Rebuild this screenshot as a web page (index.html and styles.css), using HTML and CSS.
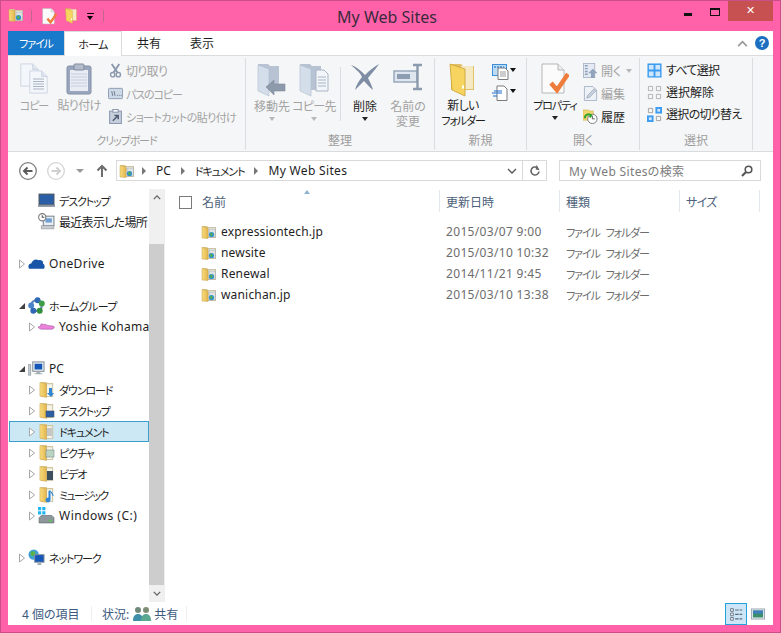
FILE: index.html
```html
<!DOCTYPE html>
<html lang="ja">
<head>
<meta charset="utf-8">
<title>My Web Sites</title>
<link rel="stylesheet" href="styles.css">
</head>
<body>
<svg class="defs" width="0" height="0">
  <defs>
    <linearGradient id="fy" x1="0" y1="0" x2="1" y2="0"><stop offset="0" stop-color="#f8dc7e"/><stop offset="1" stop-color="#e3b64e"/></linearGradient>
    <symbol id="folder" viewBox="0 0 16 16">
      <path d="M1 2h5l1 1h8v11H1z" fill="#d9c68a"/>
      <path d="M7 3.500h7.500v10H7z" fill="#f3f0e4" stroke="#b9b5a2" stroke-width=".6"/>
      <path d="M1 2.500 7 4v10.500l-6-.5z" fill="url(#fy)" stroke="#c9a24a" stroke-width=".5"/>
    </symbol>
    <symbol id="webfolder" viewBox="0 0 16 16">
      <use href="#folder"/>
      <rect x="8" y="5" width="6.500" height="8" fill="#dfe2e2" stroke="#9b9f9f" stroke-width=".5"/>
      <circle cx="10.500" cy="10.500" r="2.600" fill="#2d8fd0"/>
      <path d="M9 9.500c1-1 2-1 2.500 0s0 2-1 2.500-1.500-1.500-1.500-2.500z" fill="#55b04a"/>
    </symbol>
    <symbol id="tri-o" viewBox="0 0 8 10"><path d="M1.500 1v8L6.500 5z" fill="#fff" stroke="#a6a6a6"/></symbol>
    <symbol id="tri-f" viewBox="0 0 8 8"><path d="M7 1v6H1z" fill="#404040"/></symbol>
    <symbol id="doc" viewBox="0 0 24 30">
      <path d="M1 1h15l7 7v21H1z" fill="#f3f6fb" stroke="#c5cfdd"/>
      <path d="M16 1v7h7" fill="#dfe6f0" stroke="#c5cfdd"/>
    </symbol>
    <symbol id="copy" viewBox="0 0 28 32">
      <use href="#doc" x="0" y="0" width="19" height="24"/>
      <use href="#doc" x="9" y="7" width="19" height="24"/>
      <path d="M13 16h11M13 18.500h11M13 21h11M13 23.500h11M13 26h11" stroke="#a9b4c3"/>
    </symbol>
    <symbol id="paste" viewBox="0 0 26 32">
      <rect x="1" y="3" width="24" height="28" rx="2" fill="#9aa6bd" stroke="#8290a8"/>
      <rect x="4" y="7" width="18" height="21" fill="#e9edf3"/>
      <path d="M5 11h16M5 14h16M5 17h16M5 20h16M5 23h16" stroke="#c6cede"/>
      <rect x="8" y="1" width="10" height="6" rx="1" fill="#b4bccb" stroke="#7f8ba0"/>
    </symbol>
    <symbol id="scissors" viewBox="0 0 12 16"><path d="M2 1l6 9M10 1 4 10" stroke="#8c99ad" stroke-width="2" fill="none"/><circle cx="3" cy="12.500" r="2.300" fill="none" stroke="#8c99ad" stroke-width="1.500"/><circle cx="9" cy="12.500" r="2.300" fill="none" stroke="#8c99ad" stroke-width="1.500"/></symbol>
    <symbol id="path" viewBox="0 0 16 12"><rect x=".5" y=".5" width="15" height="11" rx="1" fill="#ced9e8" stroke="#8b9ab0"/><path d="M4 3.500l1 5M6.500 3.500l1 5" stroke="#68768c"/><path d="M9.500 8h1M11.500 8h1M13.500 8h1" stroke="#68768c"/></symbol>
    <symbol id="shortcut" viewBox="0 0 12 14"><rect x=".5" y="2" width="11" height="11.500" fill="#c7cfdc" stroke="#8e9ab0"/><rect x="3.500" y=".5" width="5" height="2.500" fill="#fff" stroke="#8e9ab0"/><path d="M3.500 11 8 6.500M5 6h3.500v3.500" stroke="#4d5b73" stroke-width="1.400" fill="none"/></symbol>
    <symbol id="move" viewBox="0 0 30 34">
      <path d="M1 1h10l2 2h9v24H1z" fill="#b7c3d3"/>
      <path d="M1 2l11 4v27L1 28z" fill="#d4deeb" stroke="#aebccd" stroke-width=".6"/>
      <path d="M9 24l8-7v4h11v7H17v4z" fill="#8d9aaa" stroke="#7f8c9c" stroke-width=".6"/>
    </symbol>
    <symbol id="copyto" viewBox="0 0 30 34">
      <path d="M1 1h10l2 2h9v24H1z" fill="#b7c3d3"/>
      <path d="M1 2l11 4v27L1 28z" fill="#d4deeb" stroke="#aebccd" stroke-width=".6"/>
      <path d="M17 7h8l4 4v17H17z" fill="#f2f5f9" stroke="#a9b5c6"/>
      <path d="M19 14h8M19 17h8M19 20h8M19 23h8" stroke="#a9b5c6"/>
    </symbol>
    <symbol id="del" viewBox="0 0 30 28"><path d="M1 2c6 2 10 6 14 10C20 7 24 4 29 1c-4 6-8 10-11 14 2 4 4 8 5 12-4-3-6-6-9-9-3 3-6 6-9 9 1-5 4-9 7-13C10 9 5 6 1 2z" fill="#7e8da3"/></symbol>
    <symbol id="rename" viewBox="0 0 30 28"><rect x="1" y="8" width="23" height="11" fill="#dfe6ef" stroke="#93a3b7" stroke-width="1.400"/><rect x="4" y="11" width="13" height="5" fill="#8d9db2"/><path d="M20 2h9M20 26h9M24.500 2v24" stroke="#8c9aae" stroke-width="2.400" fill="none"/></symbol>
    <symbol id="bigfolder" viewBox="0 0 28 34">
      <path d="M2 1h10l2 2h11v24H2z" fill="#e2c268"/>
      <path d="M12 3h12v23H12z" fill="#f4e9c2"/>
      <path d="M1 1l15 5v27L3 27z" fill="#f6d45f" stroke="#c99f36" stroke-width=".8"/>
      <path d="M14 22a1 2 0 1 0 .01 0z" fill="#fff"/>
    </symbol>
    <symbol id="newitem" viewBox="0 0 17 16"><rect x=".5" y=".5" width="14" height="11" fill="#bcdcf6" stroke="#3e8fd6"/><path d="M2 3h10" stroke="#3e8fd6" stroke-width="1.500" stroke-dasharray="2 1"/><path d="M6 4h7l3 3v8.500H6z" fill="#fff" stroke="#7b7b7b"/><path d="M8 8h6M8 10h6M8 12h6" stroke="#9a9a9a"/></symbol>
    <symbol id="easy" viewBox="0 0 17 16"><path d="M5 1h7l3 3v11.500H5z" fill="#fff" stroke="#7b7b7b"/><path d="M0 8h10M2 6h8M1 11h4" stroke="#1a6fd2" stroke-width="1.200"/></symbol>
    <symbol id="props" viewBox="0 0 28 32">
      <path d="M1 1h16l6 6v23H1z" fill="#fbfbfb" stroke="#b6b6b6"/>
      <path d="M17 1v6h6" fill="#ececec" stroke="#b6b6b6"/>
      <path d="M10 20l6 7 11-16" fill="none" stroke="#ee7c3b" stroke-width="4.500"/>
    </symbol>
    <symbol id="open" viewBox="0 0 16 16"><rect x=".5" y=".5" width="12" height="15" fill="#e4eaf3" stroke="#aeb9c9"/><path d="M2 3h3M2 6h3M2 9h3M2 12h3" stroke="#8fa1b8" stroke-width="1.500"/><path d="M10.500 6l5 5h-3v5h-4v-5h-3z" fill="#8fa3ba"/></symbol>
    <symbol id="edit" viewBox="0 0 14 16"><path d="M.5.500h9l4 4v11H.5z" fill="#eef2f7" stroke="#a7b4c6"/><path d="M3 13l1-3 7-7 2 2-7 7z" fill="#c8d1de" stroke="#8c9ab0" stroke-width=".7"/></symbol>
    <symbol id="history" viewBox="0 0 16 16"><path d="M0 1h6l1 1h4v10H0z" fill="#f2d66f" stroke="#c9a540" stroke-width=".5"/><circle cx="10" cy="10.500" r="5" fill="#fff" stroke="#777"/><path d="M10 7.500v3h2.500" stroke="#555" fill="none"/><path d="M2 10a4 4 0 0 1 7-3l-2 2" fill="none" stroke="#2ea32e" stroke-width="2"/></symbol>
    <symbol id="selall" viewBox="0 0 16 16"><rect x=".5" y=".5" width="15" height="15" fill="#3b9cf0"/><path d="M2 2h5v5H2zM9 2h5v5H9zM2 9h5v5H2zM9 9h5v5H9z" fill="#cfe6fb"/></symbol>
    <symbol id="selnone" viewBox="0 0 16 16"><path d="M1.500 1.500h4.500v4.500H1.500zM10 1.500h4.500v4.500H10zM1.500 10h4.500v4.500H1.500zM10 10h4.500v4.500H10z" fill="none" stroke="#b0b0b0"/></symbol>
    <symbol id="selinv" viewBox="0 0 16 16"><path d="M1.500 1.500h4.500v4.500H1.500zM10 10h4.500v4.500H10z" fill="none" stroke="#a0a0a0"/><rect x="9" y="0" width="7" height="7" fill="#3b9cf0"/><rect x="0" y="9" width="7" height="7" fill="#3b9cf0"/><rect x="11" y="2" width="3" height="3" fill="#cfe6fb"/><rect x="2" y="11" width="3" height="3" fill="#cfe6fb"/></symbol>
    <symbol id="desk" viewBox="0 0 16 16"><rect x="1" y="2" width="14" height="10" fill="#2a5fa8" stroke="#46525f"/><rect x="0" y="12" width="16" height="2" fill="#8a949e"/></symbol>
    <symbol id="recent" viewBox="0 0 16 16"><rect x="5" y="3" width="10" height="9" fill="#e8eef4" stroke="#7b8794"/><rect x="7" y="5" width="6" height="4" fill="#6f9ed0"/><rect x="3" y="12" width="12" height="3" fill="#c7ccd1" stroke="#8a9097" stroke-width=".5"/><circle cx="4" cy="4" r="3.400" fill="#fff" stroke="#777"/><path d="M4 2v2h2" stroke="#555" fill="none"/></symbol>
    <symbol id="onedrive" viewBox="0 0 16 12"><path d="M1 11C-.5 8 1 6 3 6c1-3 4-5 7-3 2-1 5 1 4 3 2 1 2 4 1 5z" fill="#1a56a8"/></symbol>
    <symbol id="group" viewBox="0 0 16 16"><circle cx="8" cy="8" r="5" fill="none" stroke="#5b7fb3" stroke-width="2"/><circle cx="9" cy="3" r="2.800" fill="#2f68b5"/><circle cx="3" cy="8" r="2.800" fill="#4b83c9"/><circle cx="13" cy="6" r="2.800" fill="#3f9e46"/><circle cx="11" cy="13" r="2.800" fill="#2f8f3a"/><circle cx="5" cy="13" r="2.800" fill="#2f68b5"/></symbol>
    <symbol id="yoshie" viewBox="0 0 16 8"><path d="M3 1.500c2 1 4 0 5 1s5 .5 7 1.500c1 1 0 2-2 2.500H4C2 6.500 1 6 0 4.500l2-.5z" fill="#ec82dc" stroke="#a55aa5" stroke-width=".6"/></symbol>
    <symbol id="pc" viewBox="0 0 18 16"><rect x="5" y="1" width="12" height="10" fill="#dfe5ea" stroke="#808b96"/><rect x="7" y="3" width="8" height="6" fill="#1557b8"/><path d="M9 11h4v2h2v1H7v-1h2z" fill="#a3adb6"/><rect x="0" y="4" width="3" height="11" fill="#c3cbd1" stroke="#7b858f" stroke-width=".6"/></symbol>
    <symbol id="kfolder" viewBox="0 0 16 18">
      <path d="M2 1h6l1 1h6v15H2z" fill="#d9c68a"/>
      <path d="M8 3h6.500v13.500H8z" fill="#f6f3e8" stroke="#b9b5a2" stroke-width=".6"/>
      <path d="M1 1.500 8 3v14.500L1 16z" fill="url(#fy)" stroke="#c9a24a" stroke-width=".5"/>
    </symbol>
    <symbol id="drive" viewBox="0 0 16 16"><path d="M0 0h3v3H0zM4 0h3v3H4zM0 4h3v3H0zM4 4h3v3H4z" fill="#1fb6f1"/><path d="M1 10l2-2h10l2 2v5H1z" fill="#8d979c" stroke="#5f686d" stroke-width=".6"/><rect x="10" y="12" width="3" height="1.500" fill="#5ec24e"/></symbol>
    <symbol id="net" viewBox="0 0 18 18"><circle cx="6" cy="6" r="5.500" fill="#3f9fd8"/><path d="M3 3c2-1 4-1 5 1 0 2-2 2-3 4-2 0-3-2-2-5z" fill="#5ab34a"/><rect x="7" y="6" width="10" height="8" fill="#1557b8" stroke="#8b949c"/><rect x="10" y="14" width="4" height="3" fill="#a6aeb5"/></symbol>
    <symbol id="users" viewBox="0 0 18 16"><circle cx="5" cy="4" r="3" fill="#6f8a78"/><path d="M0 15c0-5 2-7 5-7s5 2 5 7z" fill="#3f8fa8"/><circle cx="13" cy="4" r="3" fill="#7c8f75"/><path d="M8 15c0-5 2-7 5-7s5 2 5 7z" fill="#5aa88f"/></symbol>
    <symbol id="mag" viewBox="0 0 12 12"><circle cx="7.500" cy="4.500" r="3.300" fill="none" stroke="#555" stroke-width="1.600"/><path d="M5 7 1 11" stroke="#555" stroke-width="2.200"/></symbol>
  </defs>
</svg>

<div class="window">
  <header class="titlebar">
    <div class="qat">
      <svg class="ic16"><use href="#webfolder"/></svg>
      <span class="qat-sep"></span>
      <svg class="qat-doc"><use href="#props"/></svg>
      <svg class="qat-folder"><use href="#bigfolder"/></svg>
      <span class="qat-drop"></span>
      <span class="qat-sep qat-sep-last"></span>
    </div>
    <h1 class="title">My Web Sites</h1>
    <div class="controls">
      <span class="ctl"><i class="ctl-min"></i></span>
      <span class="ctl"><i class="ctl-max"></i></span>
      <span class="ctl-close">✕</span>
    </div>
  </header>

  <div class="frame">
    <nav class="tabs">
      <span class="tab tab-file n">ファイル</span>
      <span class="tab tab-home n1">ホーム</span>
      <span class="tab tab-share">共有</span>
      <span class="tab tab-view">表示</span>
      <span class="tabs-right">
        <svg class="chev" viewBox="0 0 12 8"><path d="M1 7l5-5 5 5" fill="none" stroke="#9a9a9a" stroke-width="2"/></svg>
        <span class="help">?</span>
      </span>
    </nav>

    <section class="ribbon">
      <div class="group g-clip">
        <div class="group-body">
          <div class="big w-copy dis"><svg class="i-copy"><use href="#copy"/></svg><span class="n">コピー</span></div>
          <div class="big w-paste dis"><svg class="i-paste"><use href="#paste"/></svg><span class="n0">貼り付け</span></div>
          <div class="small-col dis">
            <div class="small"><svg class="s-ic"><use href="#scissors"/></svg><span class="n0">切り取り</span></div>
            <div class="small"><svg class="s-ic"><use href="#path"/></svg><span class="n">パスのコピー</span></div>
            <div class="small"><svg class="s-ic"><use href="#shortcut"/></svg><span class="n1">ショートカットの貼り付け</span></div>
          </div>
        </div>
        <div class="group-label n">クリップボード</div>
      </div>
      <div class="group g-org">
        <div class="group-body">
          <div class="big w-move dis"><svg class="i-move"><use href="#move"/></svg><span>移動先</span><i class="caret caret-dis"></i></div>
          <div class="big w-copyto dis"><svg class="i-move"><use href="#copyto"/></svg><span class="n0">コピー先</span><i class="caret caret-dis"></i></div>
          <span class="vsep"></span>
          <div class="big w-del"><svg class="i-del"><use href="#del"/></svg><span>削除</span><i class="caret"></i></div>
          <div class="big w-ren dis"><svg class="i-del"><use href="#rename"/></svg><span>名前の<br>変更</span></div>
        </div>
        <div class="group-label">整理</div>
      </div>
      <div class="group g-new">
        <div class="group-body">
          <div class="big w-newf"><svg class="i-bigf"><use href="#bigfolder"/></svg><span class="n0">新しい<br><span class="n">フォルダー</span></span></div>
          <div class="new-col">
            <div class="new-item"><svg class="n-ic"><use href="#newitem"/></svg><i class="caret"></i></div>
            <div class="new-item"><svg class="n-ic"><use href="#easy"/></svg><i class="caret"></i></div>
          </div>
        </div>
        <div class="group-label">新規</div>
      </div>
      <div class="group g-open">
        <div class="group-body">
          <div class="big w-props"><svg class="i-props"><use href="#props"/></svg><span class="n">プロパティ</span><i class="caret"></i></div>
          <div class="small-col col-open">
            <div class="small dis"><svg class="s-ic"><use href="#open"/></svg><span>開く</span><i class="caret caret-dis caret-inline"></i></div>
            <div class="small dis"><svg class="s-ic"><use href="#edit"/></svg><span>編集</span></div>
            <div class="small"><svg class="s-ic"><use href="#history"/></svg><span>履歴</span></div>
          </div>
        </div>
        <div class="group-label">開く</div>
      </div>
      <div class="group g-sel">
        <div class="group-body">
          <div class="small-col col-sel">
            <div class="small"><svg class="s-ic"><use href="#selall"/></svg><span class="n0">すべて選択</span></div>
            <div class="small"><svg class="s-ic"><use href="#selnone"/></svg><span>選択解除</span></div>
            <div class="small"><svg class="s-ic"><use href="#selinv"/></svg><span class="n0">選択の切り替え</span></div>
          </div>
        </div>
        <div class="group-label">選択</div>
      </div>
    </section>

    <section class="addressbar">
      <span class="nav-btn nav-back"><svg viewBox="0 0 18 18"><circle cx="9" cy="9" r="8.300" fill="#fff" stroke="#7d7d7d" stroke-width="1.300"/><path d="M13.500 9h-8M8.500 5.500 5 9l3.500 3.500" fill="none" stroke="#5c5c5c" stroke-width="2"/></svg></span>
      <span class="nav-btn nav-fwd"><svg viewBox="0 0 18 18"><circle cx="9" cy="9" r="8.300" fill="#fff" stroke="#d4d4d4" stroke-width="1.300"/><path d="M4.500 9h8M9.500 5.500 13 9l-3.500 3.500" fill="none" stroke="#cfcfcf" stroke-width="2"/></svg></span>
      <i class="nav-drop"></i>
      <svg class="nav-up" viewBox="0 0 12 14"><path d="M6 13V2M1.500 6.500 6 2l4.500 4.500" fill="none" stroke="#6d6d6d" stroke-width="2"/></svg>
      <div class="addr">
        <svg class="ic16"><use href="#webfolder"/></svg>
        <i class="crumb"></i><span class="ctext">PC</span>
        <i class="crumb"></i><span class="ctext n">ドキュメント</span>
        <i class="crumb"></i><span class="ctext la">My Web Sites</span>
        <svg class="addr-chev" viewBox="0 0 10 6"><path d="M1 1l4 4 4-4" fill="none" stroke="#555" stroke-width="1.300"/></svg>
      </div>
      <div class="refresh"><svg viewBox="0 0 12 12"><path d="M10 6.500a4 4 0 1 1-1.500-3.700" fill="none" stroke="#666" stroke-width="1.600"/><path d="M7 0v5h4z" transform="rotate(10 9 3)" fill="#666"/></svg></div>
      <div class="search"><span class="la">My Web Sitesの検索</span><svg class="mag"><use href="#mag"/></svg></div>
    </section>

    <main class="main">
      <aside class="tree">
        <div class="tree-list">
          <div class="row ind2"><span class="tw"></span><svg class="t-ic"><use href="#desk"/></svg><span class="n">デスクトップ</span></div>
          <div class="row ind2"><span class="tw"></span><svg class="t-ic"><use href="#recent"/></svg><span class="n0">最近表示した場所</span></div>
          <div class="row row-gap"></div>
          <div class="row ind1"><svg class="tw"><use href="#tri-o"/></svg><svg class="t-ic"><use href="#onedrive"/></svg><span class="la">OneDrive</span></div>
          <div class="row row-gap"></div>
          <div class="row ind1"><svg class="tw tw-f"><use href="#tri-f"/></svg><svg class="t-ic"><use href="#group"/></svg><span class="n1">ホームグループ</span></div>
          <div class="row ind2"><svg class="tw"><use href="#tri-o"/></svg><svg class="t-ic"><use href="#yoshie"/></svg><span class="la">Yoshie Kohama</span></div>
          <div class="row row-gap"></div>
          <div class="row ind1"><svg class="tw tw-f"><use href="#tri-f"/></svg><svg class="t-ic"><use href="#pc"/></svg><span>PC</span></div>
          <div class="row ind2"><svg class="tw"><use href="#tri-o"/></svg><svg class="t-ic"><use href="#kfolder"/><path d="M11 7v5H9l4 4 3-4h-2V7z" fill="#2f86d6"/></svg><span class="n">ダウンロード</span></div>
          <div class="row ind2"><svg class="tw"><use href="#tri-o"/></svg><svg class="t-ic"><use href="#kfolder"/><rect x="8" y="9" width="8" height="6" fill="#2a5fa8" stroke="#46525f" stroke-width=".6"/></svg><span class="n">デスクトップ</span></div>
          <div class="row ind2 row-sel"><svg class="tw"><use href="#tri-o"/></svg><svg class="t-ic"><use href="#kfolder"/><path d="M9 6h5M9 8h5M9 10h5M9 12h5" stroke="#8e9aa8"/></svg><span class="n">ドキュメント</span></div>
          <div class="row ind2"><svg class="tw"><use href="#tri-o"/></svg><svg class="t-ic"><use href="#kfolder"/><rect x="8" y="6" width="8" height="7" fill="#b9d4c2" stroke="#7d8c92" stroke-width=".6"/></svg><span class="n">ピクチャ</span></div>
          <div class="row ind2"><svg class="tw"><use href="#tri-o"/></svg><svg class="t-ic"><use href="#kfolder"/><rect x="9" y="6" width="6" height="9" fill="#3d4f5c"/></svg><span class="n">ビデオ</span></div>
          <div class="row ind2"><svg class="tw"><use href="#tri-o"/></svg><svg class="t-ic"><use href="#kfolder"/><path d="M12 5v9a2 2 0 1 1-2-2h1V5zM12 5c2 1 3 3 3 5" fill="#2f86d6" stroke="#2f86d6"/></svg><span class="n2">ミュージック</span></div>
          <div class="row ind2"><svg class="tw"><use href="#tri-o"/></svg><svg class="t-ic"><use href="#drive"/></svg><span class="la2">Windows (C:)</span></div>
          <div class="row row-gap"></div>
          <div class="row ind1"><svg class="tw"><use href="#tri-o"/></svg><svg class="t-ic"><use href="#net"/></svg><span class="n">ネットワーク</span></div>
        </div>
        <div class="scroll">
          <div class="sc-btn"><svg viewBox="0 0 10 6"><path d="M1 5l4-4 4 4" fill="none" stroke="#606060" stroke-width="1.600"/></svg></div>
          <div class="sc-space"></div>
          <div class="sc-thumb"></div>
          <div class="sc-end"><svg viewBox="0 0 10 6"><path d="M1 1l4 4 4-4" fill="none" stroke="#606060" stroke-width="1.600"/></svg></div>
        </div>
      </aside>
      <section class="files">
        <div class="head">
          <div class="col c-name"><span class="check"></span><span>名前</span><i class="sort"></i></div>
          <div class="col c-date">更新日時</div>
          <div class="col c-type">種類</div>
          <div class="col c-size n0">サイズ</div>
        </div>
        <div class="frow"><div class="c-name fname"><svg class="ic16"><use href="#webfolder"/></svg><span class="la1">expressiontech.jp</span></div><div class="c-date fmeta la">2015/03/07 9:00</div><div class="c-type fmeta n ftype">ファイル フォルダー</div></div>
        <div class="frow"><div class="c-name fname"><svg class="ic16"><use href="#webfolder"/></svg><span class="la1">newsite</span></div><div class="c-date fmeta la">2015/03/10 10:32</div><div class="c-type fmeta n ftype">ファイル フォルダー</div></div>
        <div class="frow"><div class="c-name fname"><svg class="ic16"><use href="#webfolder"/></svg><span class="la1">Renewal</span></div><div class="c-date fmeta la">2014/11/21 9:45</div><div class="c-type fmeta n ftype">ファイル フォルダー</div></div>
        <div class="frow"><div class="c-name fname"><svg class="ic16"><use href="#webfolder"/></svg><span class="la1">wanichan.jp</span></div><div class="c-date fmeta la">2015/03/10 13:38</div><div class="c-type fmeta n ftype">ファイル フォルダー</div></div>
      </section>
    </main>

    <footer class="status">
      <span class="st-count">4 個の項目</span>
      <span class="st-sep"></span>
      <span class="st-state">状況:</span>
      <svg class="st-users"><use href="#users"/></svg>
      <span class="st-share">共有</span>
      <span class="st-sep"></span>
      <span class="st-right">
        <span class="view view-on"><svg viewBox="0 0 18 18"><path d="M3 3h3v3H3zM3 8h3v3H3zM3 13h3v3H3z" fill="#fff" stroke="#5f6b7a"/><path d="M8 4.500h8M8 9.500h8M8 14.500h8" stroke="#5f6b7a" stroke-width="1.400" stroke-dasharray="4 1"/></svg></span>
        <span class="view view-off"><svg viewBox="0 0 18 14"><rect x=".5" y=".5" width="17" height="13" fill="#e8eef2" stroke="#8a96a3"/><rect x="2.500" y="2.500" width="13" height="9" fill="#3c8d6a"/><rect x="2.500" y="2.500" width="13" height="4" fill="#3f7fc0"/></svg></span>
      </span>
    </footer>
  </div>
</div>
</body>
</html>
```

FILE: styles.css
```css
* { box-sizing: border-box; }
html, body { margin: 0; padding: 0; }
body {
  width: 781px;
  height: 633px;
  overflow: hidden;
  font-family: "Noto Sans", "Noto Sans CJK JP", sans-serif;
  font-size: 12px;
  font-feature-settings: "palt";
  color: #1e1e1e;
}
.defs { display: block; height: 0; }
svg { display: block; flex: none; }
i { display: block; flex: none; }

/* narrow kana and slightly wide Latin, matching the system UI font */
.n { font-size: 11px; letter-spacing: -1.100px; }
.n1 { font-size: 11px; letter-spacing: -.6px; }
.n2 { font-size: 11px; letter-spacing: -1.600px; }
.n0 { letter-spacing: -.7px; }
.la { letter-spacing: .33px; }
.la1 { letter-spacing: .18px; }
.la2 { letter-spacing: .5px; }

.window {
  width: 781px;
  height: 633px;
  background: #ff62a8;
  border: 1px solid #c94f88;
  padding: 0 7px 7px;
  display: flex;
  flex-direction: column;
}

/* title bar */
.titlebar {
  height: 30px;
  display: flex;
  align-items: flex-start;
  flex: none;
}
.qat { width: 200px; height: 30px; display: flex; align-items: center; margin-top: 0; }
.qat > .ic16 { margin-top: -2px; }
.ic16 { width: 16px; height: 16px; }
.qat-sep { width: 1px; height: 12px; background: #c2688f; margin: 0 0 0 7px; }
.qat-doc { width: 15px; height: 17px; margin-left: 10px; }
.qat-folder { width: 13px; height: 16px; margin-left: 8px; }
.qat-drop { width: 7px; height: 7px; margin-left: 9px; border-top: 1px solid #000; position: relative; }
.qat-drop::after { content: ""; position: absolute; left: 0; top: 2px; border: 3.500px solid transparent; border-top: 4px solid #000; border-bottom: 0; }
.qat-sep-last { margin-left: 9px; }
.title {
  width: 358px;
  margin: 5px 0 0 0;
  font-size: 16px;
  line-height: 22px;
  font-weight: 400;
  color: #3a2a3e;
  text-align: center;
  font-family: "Noto Sans", sans-serif;
}
.controls { margin-left: auto; display: flex; align-items: flex-start; }
.ctl { width: 27px; height: 21px; display: flex; align-items: center; justify-content: center; }
.ctl-min { width: 8px; height: 3px; background: #111; margin-top: 5px; }
.ctl-max { width: 10px; height: 8px; border: 1px solid #111; border-top-width: 2px; }
.ctl-close {
  width: 45px; height: 20px; background: #c75050; color: #fff;
  text-align: center; font: 700 11px/20px "DejaVu Sans", sans-serif;
}

/* frame */
.frame {
  flex: 1;
  background: #fff;
  display: flex;
  flex-direction: column;
  min-height: 0;
}

/* tabs */
.tabs { height: 24px; display: flex; flex: none; align-items: stretch; position: relative; }
.tab { display: block; line-height: 25px; text-align: center; }
.tab-file { width: 56px; background: #1979ca; color: #fff; }
.tab-home { width: 58px; border: 1px solid #dadbdc; border-bottom: 0; height: 25px; background: #fff; position: relative; z-index: 1; }
.tab-share { width: 54px; }
.tab-view { width: 52px; }
.tabs-right { margin-left: auto; display: flex; align-items: center; gap: 7px; padding-right: 4px; }
.chev { width: 11px; height: 7px; }
.help {
  width: 14px; height: 14px; border-radius: 50%; background: #1b6fc0; color: #fff;
  font: 700 11px/14px "Liberation Sans", sans-serif; text-align: center;
}

/* ribbon */
.ribbon {
  height: 97px;
  flex: none;
  display: flex;
  background: #f5f6f7;
  border-top: 1px solid #dadbdc;
  border-bottom: 1px solid #dadbdc;
  padding-top: 2px;
}
.group { display: flex; flex-direction: column; border-right: 1px solid #dcdde0; height: 92px; flex: none; }
.group-body { flex: 1; display: flex; min-height: 0; }
.group-label { height: 16px; line-height: 16px; margin-bottom: 1px; text-align: center; color: #9d9d9d; flex: none; }
.g-clip { width: 238px; }
.g-org { width: 189px; }
.g-new { width: 92px; }
.g-open { width: 113px; }
.g-sel { width: 113px; }
.dis { color: #a3a3a3; }
.big { display: flex; flex: none; flex-direction: column; align-items: center; text-align: center; line-height: 15px; }
.big > svg { margin-top: 5px; }
.big > span { margin-top: 3px; white-space: nowrap; display: block; }
.w-copy { width: 52px; }
.w-paste { width: 38px; margin-left: 0; }
.w-move { width: 42px; margin-left: 5px; }
.w-copyto { width: 42px; }
.w-move > span, .w-copyto > span { margin-top: 2px; }
.w-del { width: 46px; margin-left: 1px; }
.w-ren { width: 44px; margin-left: -2px; }
.w-newf { width: 56px; }
.w-newf > span { margin-top: 1px; }
.w-props { width: 56px; }
.i-copy { width: 28px; height: 32px; }
.i-paste { width: 26px; height: 32px; }
.i-move { width: 30px; height: 34px; }
.i-del { width: 30px; height: 28px; margin-bottom: 5px; }
.i-bigf { width: 28px; height: 34px; }
.i-props { width: 28px; height: 32px; }
.caret { width: 0; height: 0; border: 3.500px solid transparent; border-top: 4px solid #222; border-bottom: 0; margin-top: 3px; }
.caret-dis { border-top-color: #b8b8b8; }
.caret-inline { margin-left: 5px; margin-top: 0; }
.vsep { width: 1px; height: 54px; background: #dcdde0; margin-top: 9px; margin-left: 5px; flex: none; }
.small-col { display: flex; flex-direction: column; padding-top: 1px; margin-left: 10px; }
.small { height: 23px; display: flex; align-items: center; white-space: nowrap; }
.s-ic { width: 15px; height: 15px; margin-right: 3px; flex: none; }
.col-open { margin-left: 0; }
.col-sel { margin-left: 7px; }
.col-sel .small { height: 22px; }
.col-sel .s-ic { margin-right: 4px; }
.new-col { display: flex; flex-direction: column; gap: 4px; padding-top: 5px; margin-left: 1px; }
.new-item { display: flex; align-items: center; gap: 1px; height: 17px; }
.n-ic { width: 17px; height: 16px; }
.new-item .caret { margin-top: 0; border-top-color: #111; margin-bottom: 4px; }

/* address */
.addressbar { height: 37px; flex: none; display: flex; align-items: center; padding-left: 11px; }
.nav-btn { width: 18px; height: 18px; display: block; }
.nav-btn svg { width: 18px; height: 18px; }
.nav-fwd { margin-left: 10px; }
.nav-drop { width: 0; height: 0; border: 4px solid transparent; border-top: 4px solid #999; border-bottom: 0; margin-left: 11px; }
.nav-up { width: 12px; height: 14px; margin-left: 12px; }
.addr {
  width: 407px; height: 21px; margin-left: 8px;
  border: 1px solid #d9d9d9;
  display: flex; align-items: center; padding-left: 2px;
  color: #1e1e1e;
}
.crumb { width: 0; height: 0; border: 4px solid transparent; border-left: 4px solid #777; border-right: 0; margin: 0 10px 0 10px; }
.addr .ic16 { margin-right: -3px; }
.ctext { white-space: nowrap; }
.addr-chev { width: 10px; height: 6px; margin-left: auto; margin-right: 5px; }
.refresh {
  width: 24px; height: 21px; border: 1px solid #d9d9d9; border-left: 0;
  display: flex; align-items: center; justify-content: center;
}
.refresh svg { width: 12px; height: 12px; }
.search {
  width: 202px; height: 21px; margin-left: 12px;
  border: 1px solid #d9d9d9;
  display: flex; align-items: center; padding: 0 7px 0 9px;
  color: #7c7c7c;
}
.mag { width: 12px; height: 12px; margin-left: auto; }

/* main */
.main { flex: 1; display: flex; min-height: 0; }
.tree { width: 157px; display: flex; flex: none; border-right: 1px solid #eeeeee; }
.tree-list { width: 141px; overflow: hidden; flex: none; padding: 1px 0 0 1px; }
.row {
  height: 21px; display: flex; align-items: center; white-space: nowrap;
  overflow: hidden; color: #1e1e1e;
}
.ind1 { padding-left: 9px; }
.ind2 { padding-left: 19px; }
.tw { width: 8px; height: 10px; margin-right: 2px; flex: none; }
.tw-f { height: 8px; }
.ind1 .t-ic { margin-right: 4px; }
.t-ic { width: 17px; height: 17px; margin-right: 4px; flex: none; }
.row-sel { background: #cce8f5; box-shadow: inset 0 0 0 1px #3f9fcc; }
.scroll { width: 15px; flex: none; display: flex; flex-direction: column; background: #f0f0f0; }
.sc-btn { height: 17px; display: flex; align-items: center; justify-content: center; }
.sc-btn svg, .sc-end svg { width: 8px; height: 5px; }
.sc-space { height: 38px; }
.sc-thumb { flex: 1; background: #cdcdcd; }
.sc-end { height: 17px; display: flex; align-items: center; justify-content: center; }

/* file list */
.files { flex: 1; min-width: 0; padding-top: 1px; }
.head { height: 25px; display: flex; color: #4c607a; }
.col { height: 22px; display: flex; align-items: center; padding: 2px 0 0 6px; border-right: 1px solid #e3e8ef; position: relative; }
.c-name { width: 275px; flex: none; }
.c-date { width: 120px; flex: none; }
.c-type { width: 120px; flex: none; }
.c-size { width: 80px; flex: none; }
.head .c-name { padding-left: 14px; }
.check { width: 13px; height: 13px; border: 1px solid #7a7a7a; margin-right: 10px; background: #fff; }
.sort {
  position: absolute; left: 139px; top: 0;
  width: 0; height: 0; border: 3.500px solid transparent; border-bottom: 4px solid #8fb3cf; border-top: 0;
}
.frow { height: 21px; display: flex; align-items: center; }
.head + .frow { margin-top: 6px; }
.fname { display: flex; align-items: center; padding-left: 36px; }
.fname .ic16 { margin-right: 4px; }
.fmeta { color: #6d6d6d; padding-left: 6px; white-space: nowrap; }
.ftype { word-spacing: 4px; }

/* status */
.status { height: 23px; flex: none; display: flex; align-items: center; color: #3c5a7e; padding-left: 14px; }
.st-count { width: 69px; white-space: nowrap; }
.st-sep { width: 1px; height: 15px; background: #eeeeee; }
.st-state { margin-left: 10px; white-space: nowrap; }
.st-users { width: 18px; height: 16px; margin-left: 4px; }
.st-share { margin: 0 8px 0 3px; white-space: nowrap; }
.st-right { margin-left: auto; display: flex; align-items: center; gap: 2px; padding-right: 6px; }
.view { height: 22px; display: flex; align-items: center; justify-content: center; }
.view-on { width: 22px; background: #cde6f7; border: 1px solid #26a0da; }
.view-on svg { width: 16px; height: 16px; }
.view-off { width: 18px; }
.view-off svg { width: 14px; height: 12px; }
```
